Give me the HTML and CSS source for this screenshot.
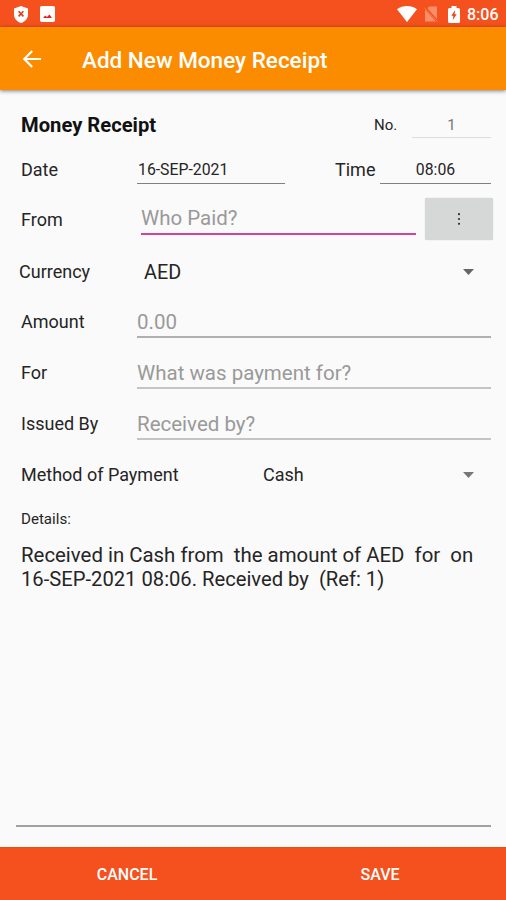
FILE: index.html
```html
<!DOCTYPE html>
<html lang="en">
<head>
<meta charset="utf-8">
<title>Add New Money Receipt</title>
<link rel="stylesheet" href="styles.css">
</head>
<body>
<div class="screen">
  <div class="status">
    <svg class="shield" width="14" height="17" viewBox="0 0 14 17"><path fill="#fff" d="M7 0 14 2.6V8.5C14 12.5 11 15.8 7 17 3 15.8 0 12.5 0 8.5V2.6Z"/><path d="M4.6 5.2 9.4 10.4M9.4 5.2 4.6 10.4" stroke="#e03a18" stroke-width="1.6"/></svg>
    <svg class="photo" width="15" height="16" viewBox="0 0 15 16"><rect width="15" height="16" rx="1.8" fill="#fff"/><path fill="#e02a18" d="M3 12 5.3 9.6 7 11 9.5 8.6 12 12Z"/></svg>
    <svg class="wifi" width="20" height="16" viewBox="0 0 20 16"><path fill="#fff" d="M0 3.2C6-1 14-1 20 3.2L10 16Z"/></svg>
    <svg class="sim" width="14" height="16" viewBox="0 0 14 16"><path fill="#fa8e6b" d="M5 .5H13V13L3.6 2.4ZM1 3.6 12 15.5H1Z"/><path d="M.5 1.8 13.5 15.8" stroke="#f9825b" stroke-width=".8"/></svg>
    <svg class="battery" width="12" height="17" viewBox="0 0 12 17"><path fill="#fff" d="M3.5 0H8.5V2H10.5Q12 2 12 3.5V15.5Q12 17 10.5 17H1.5Q0 17 0 15.5V3.5Q0 2 1.5 2H3.5Z"/><path fill="#e6451c" d="M7.2 4 3.3 9.8H5.4L4.8 14 8.7 8.2H6.6Z"/></svg>
    <span class="clock">8:06</span>
  </div>
  <header class="toolbar">
    <svg class="back" width="18" height="18" viewBox="0 0 18 18"><path d="M18 9H1.5M9.2 1 1.3 9 9.2 17" fill="none" stroke="#fff" stroke-width="2.1"/></svg>
    <h1>Add New Money Receipt</h1>
  </header>
  <main>
    <div class="row head"><h2>Money Receipt</h2><span class="small no">No.</span><span class="field number">1</span></div>
    <div class="row when"><span class="label">Date</span><span class="field date">16-SEP-2021</span><span class="label time-label">Time</span><span class="field time">08:06</span></div>
    <div class="row from"><span class="label">From</span><span class="field hint payer">Who Paid?</span>
      <span class="more"><svg width="4" height="14" viewBox="0 0 4 14" fill="#333"><circle cx="2" cy="2.2" r="1.1"/><circle cx="2" cy="7" r="1.1"/><circle cx="2" cy="11.8" r="1.1"/></svg></span></div>
    <div class="row currency"><span class="label">Currency</span><span class="choice">AED</span><svg class="arrow" width="11" height="6" viewBox="0 0 11 6"><path d="M0 0H11L5.5 6Z" fill="#666"/></svg></div>
    <div class="row entry"><span class="label">Amount</span><span class="field hint amount">0.00</span></div>
    <div class="row entry"><span class="label">For</span><span class="field hint pale">What was payment for?</span></div>
    <div class="row entry"><span class="label">Issued By</span><span class="field hint pale">Received by?</span></div>
    <div class="row method"><span class="label">Method of Payment</span><span class="choice cash">Cash</span><svg class="arrow" width="11" height="6" viewBox="0 0 11 6"><path d="M0 0H11L5.5 6Z" fill="#777"/></svg></div>
    <div class="small details">Details:</div>
    <div class="memo"><div class="line-one">Received in Cash from&nbsp; the amount of AED&nbsp; for&nbsp; on</div><div class="line-two">16-SEP-2021 08:06. Received by&nbsp; (Ref: 1)</div></div>
  </main>
  <footer><span class="cancel">CANCEL</span><span class="save">SAVE</span></footer>
</div>
</body>
</html>
```
FILE: styles.css
```css
* { box-sizing: border-box; }
body { margin: 0; font-family: Roboto, sans-serif; color: #252525; }
.screen { width: 506px; height: 900px; display: flex; flex-direction: column; background: #fafafa; overflow: hidden; white-space: nowrap; }
svg { display: block; flex: none; }
.status { height: 27px; display: flex; align-items: center; padding: 1px 9px 0 14px; background: #f4511e; color: #fff; }
.photo { margin-left: 12px; }
.wifi { margin-left: auto; }
.sim { margin-left: 7px; }
.battery { margin-left: 10px; }
.clock { width: 30px; margin-left: 7px; font-size: 16px; font-weight: 500; line-height: 26px; padding-top: 2px; }
.toolbar { height: 63px; flex: none; display: flex; align-items: center; padding: 1px 24px 0 23px; background: #fb8c00; color: #fff; box-shadow: 0 1px 4px rgba(0,0,0,.5); }
h1 { margin: 2px 0 0 41px; font-size: 22.5px; font-weight: 500; line-height: 30px; }
main { flex: 1; min-height: 0; display: flex; flex-direction: column; padding: 11px 15px 20px 16px; }
.row { height: 51px; flex: none; display: flex; align-items: center; padding-left: 5px; }
.label { width: 116px; flex: none; font-size: 18px; line-height: 24px; }
.field { height: 32px; flex: 1; border-bottom: 2px solid #b0b0b0; font-size: 20.5px; line-height: 31px; }
.hint { color: #999; }
.pale { border-color: #c4c4c4; }
.entry .field { line-height: 33px; }
.entry .label, .from .label { padding-top: 1px; }
.small { font-size: 15px; line-height: 20px; }
.head { height: 48px; }
h2 { margin: 0; font-size: 20.2px; font-weight: 700; line-height: 24px; color: #111; }
.no { margin-left: auto; width: 38px; }
.number { flex: none; width: 79px; height: 25px; line-height: 25px; border-bottom: 1px solid #ddd; font-size: 15px; text-align: center; color: #777; }
.when { height: 42px; }
.when .field { height: 27px; line-height: 26px; font-size: 15.8px; border-bottom: 1px solid #808080; }
.when .date { flex: none; width: 148px; padding-left: 1px; }
.time-label { width: 45px; margin-left: 50px; }
.time { text-align: center; }
.from { height: 56px; margin-right: -2px; }
.payer { margin-left: 4px; border-color: #d044a0; }
.more { width: 68px; height: 42px; margin-left: 9px; display: flex; align-items: center; justify-content: center; border-radius: 2px; background: #d6d8d7; box-shadow: 0 0 1px #bbb; }
.currency { height: 49px; padding-left: 3px; }
.choice { margin-left: 9px; padding-top: 2px; font-size: 19.8px; line-height: 26px; }
.arrow { margin: 0 17px 0 auto; }
.method .label { width: 242px; }
.method .cash { margin: 0; padding: 0; font-size: 18px; }
.details { margin: 9px 0 0 5px; padding-bottom: 1px; font-size: 15.1px; }
.memo { flex: 1; margin-top: 13px; padding-left: 5px; border-bottom: 2px solid #a0a0a0; font-size: 20.4px; line-height: 24px; }
.line-two { font-size: 20.2px; }
footer { height: 53px; flex: none; display: grid; grid-template-columns: 1fr 1fr; align-items: center; padding-top: 1px; text-align: center; background: #f4511e; color: #fff; border-top: 1px solid #ee4e0a; font-size: 16px; font-weight: 500; }
.cancel, .save { padding-left: 1px; }
```
